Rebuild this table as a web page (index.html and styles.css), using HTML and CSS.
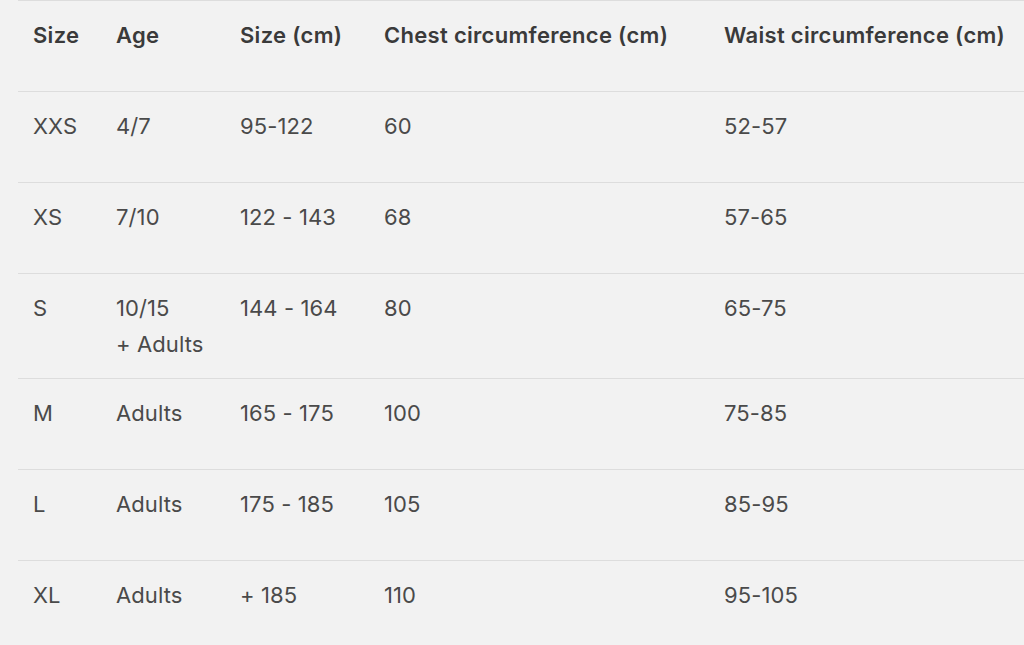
FILE: index.html
```html
<!DOCTYPE html>
<html>
<head>
<meta charset="utf-8">
<link rel="stylesheet" href="styles.css">
</head>
<body>
<table class="size-table">
  <colgroup>
    <col class="c1"><col class="c2"><col class="c3"><col class="c4"><col class="c5">
  </colgroup>
  <thead>
    <tr>
      <th>Size</th><th>Age</th><th>Size (cm)</th><th>Chest circumference (cm)</th><th>Waist circumference (cm)</th>
    </tr>
  </thead>
  <tbody>
    <tr><td>XXS</td><td>4/7</td><td>95-122</td><td>60</td><td>52-57</td></tr>
    <tr><td>XS</td><td>7/10</td><td>122 - 143</td><td>68</td><td>57-65</td></tr>
    <tr><td>S</td><td>10/15<br>+ Adults</td><td>144 - 164</td><td>80</td><td>65-75</td></tr>
    <tr><td>M</td><td>Adults</td><td>165 - 175</td><td>100</td><td>75-85</td></tr>
    <tr><td>L</td><td>Adults</td><td>175 - 185</td><td>105</td><td>85-95</td></tr>
    <tr><td>XL</td><td>Adults</td><td>+ 185</td><td>110</td><td>95-105</td></tr>
  </tbody>
</table>
</body>
</html>
```
FILE: styles.css
```css
html, body {
  margin: 0;
  padding: 0;
  background: #f2f2f2;
  overflow: hidden;
}
body {
  font-family: Inter, "Liberation Sans", sans-serif;
  font-size: 22px;
}
.size-table {
  margin-left: 18px;
  width: 1006px;
  table-layout: fixed;
  border-collapse: collapse;
}
.c1 { width: 83px; }
.c2 { width: 124px; }
.c3 { width: 144px; }
.c4 { width: 340px; }
.size-table tr {
  height: 91px;
  border-top: 1px solid #dddddd;
}
.size-table th,
.size-table td {
  text-align: left;
  vertical-align: top;
  padding: 16px 0 16px 15px;
  line-height: 36px;
  white-space: nowrap;
}
.size-table th {
  font-weight: 600;
  color: #3a3a3a;
  letter-spacing: 0.3px;
}
.size-table td {
  font-weight: 400;
  color: #4a4a4a;
  letter-spacing: 0.1px;
}
```
